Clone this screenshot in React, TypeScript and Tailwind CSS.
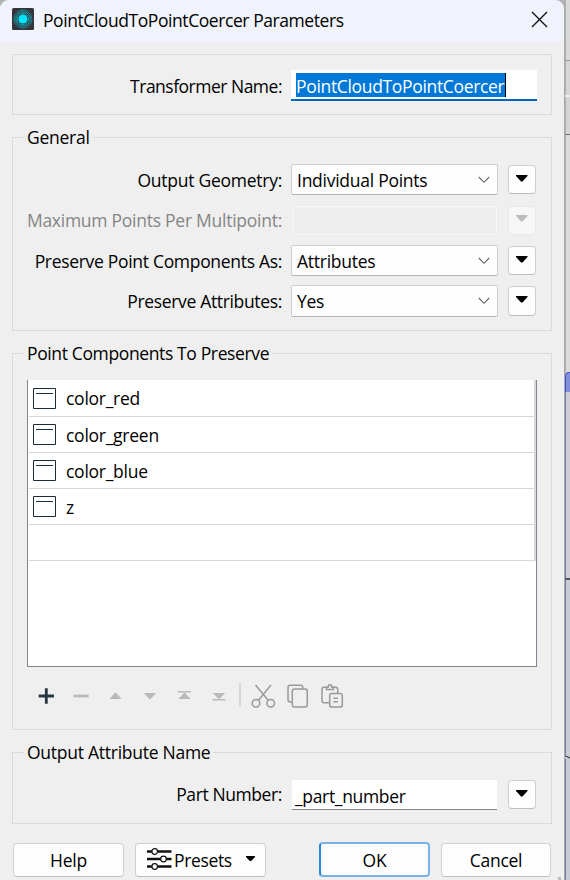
import type { ReactNode } from "react";

function Caret({ muted = false }: { muted?: boolean }) {
  return (
    <svg width="12" height="7" viewBox="0 0 12 7" className="-mt-[3px] -ml-px">
      <path d="M0 0H11.5V1L6.5 6.5H5L0 1Z" fill={muted ? "#bcbcbc" : "#000"} />
    </svg>
  );
}

function MenuButton({ muted = false, tall = "h-[29px]" }: { muted?: boolean; tall?: string }) {
  return (
    <button
      className={`ml-[10px] flex w-7 items-center justify-center rounded-[4px] border ${tall} ${
        muted ? "border-[#e8e8e8] bg-[#f7f7f7]" : "border-[#cfcfcf] border-b-[#bdbdbd] bg-[#fdfdfd]"
      }`}
    >
      <Caret muted={muted} />
    </button>
  );
}

function Combo({ children, tall = "h-[31px]" }: { children: ReactNode; tall?: string }) {
  return (
    <div className={`flex w-[207px] items-center justify-between rounded-[2px] border border-[#cfcfcf] border-b-[#b5b5b5] bg-[#fdfdfd] pr-[7px] pl-[5px] ${tall}`}>
      <span>{children}</span>
      <svg width="12" height="8" viewBox="0 0 12 8" fill="none" stroke="#666" strokeWidth="1.1">
        <path d="M0.8 1L6 6.3L11.2 1" />
      </svg>
    </div>
  );
}

function Label({ children, className = "" }: { children: ReactNode; className?: string }) {
  return <span className={`w-[270px] pr-px text-right ${className}`}>{children}</span>;
}

function Group({ title, className, children }: { title?: ReactNode; className: string; children: ReactNode }) {
  return (
    <section className={`mx-3 w-[540px] border border-[#dadada] ${className}`}>
      {title && <h2 className="-mt-[13px] ml-[11px] h-6 w-fit bg-[#efefef] pr-[3px] pl-[3px] leading-6">{title}</h2>}
      {children}
    </section>
  );
}

const components = ["color_red", "color_green", "color_blue", "z"];

function Toolbar() {
  return (
    <svg width="320" height="34" viewBox="27 679 320 34" className="mt-3 ml-[14px]" fill="none">
      <path d="M46.3 688.3V703.7M38.7 696H54" stroke="#263640" strokeWidth="2.8" />
      <path d="M73.3 696H88.7" stroke="#bcbcbc" strokeWidth="2.8" />
      <g fill="#b9b9b9">
        <path d="M109.3 699L115.5 692.3L121.7 699Z" />
        <path d="M143.8 693L150 699.7L156.2 693Z" />
        <path d="M178.3 699L184.5 692.6L190.7 699ZM178 691H191V692.5H178Z" />
        <path d="M212.8 693L219 699.2L225.2 693ZM212.5 699H225.5V700.6H212.5Z" />
      </g>
      <path d="M240 683V707" stroke="#cdcdcd" strokeWidth="1.6" />
      <g stroke="#999" strokeWidth="1.5">
        <path d="M255.5 685L268 700M271 685L258.7 700" />
        <circle cx="256" cy="703.3" r="3.8" />
        <circle cx="270.7" cy="703.3" r="3.8" />
        <path d="M292 702H290.5Q288 702 288 699.5V687.5Q288 685.3 290.3 685.3H300.5Q302.8 685.3 302.8 687.5V689" />
        <rect x="292.3" y="689" width="15" height="18" rx="2.3" />
        <path d="M329 702.7H324Q322 702.7 322 700.7V689.5Q322 687.3 324 687.3H326.5M333.5 687.3H335.5Q337.7 687.3 337.7 689.5V693" />
        <path d="M326.5 689.5V687.2H328.2Q328.2 684.8 330 684.8T331.8 687.2H333.5V689.5Z" />
        <rect x="329.7" y="693.5" width="12.6" height="13.6" rx="2.2" />
        <path d="M333.5 698.3H338M333.5 701.7H338" />
      </g>
    </svg>
  );
}

export default function App() {
  return (
    <div className="flex h-[880px] w-[570px] overflow-hidden bg-[#b4b4b4] font-['Open_Sans','Noto_Sans',sans-serif] text-[17.5px] leading-6 tracking-[-0.26px] whitespace-nowrap text-black">
      <main className="flex w-[564px] flex-col overflow-hidden rounded-t-[9px] bg-[#efefef]">
        <header className="flex h-[42px] shrink-0 items-center bg-[#f0f3fb] pr-4 pl-3">
          <svg width="22" height="22" viewBox="0 0 22 22" className="-mt-1" fill="none">
            <rect width="22" height="22" rx="1.5" fill="#36343a" />
            <circle cx="11" cy="11" r="9" stroke="#138a99" strokeWidth="1" />
            <circle cx="11" cy="11" r="7.2" stroke="#12a9bb" strokeWidth="1" />
            <circle cx="11" cy="11" r="5.6" stroke="#12a9bb" strokeWidth="0.8" />
            <circle cx="11" cy="11" r="4.6" fill="#00e5fa" />
          </svg>
          <h1 className="-mt-[3px] ml-[9px] flex-1 tracking-[-0.43px]">PointCloudToPointCoercer Parameters</h1>
          <svg width="17" height="17" viewBox="0 0 17 17" className="-mt-[3px]" stroke="#111" strokeWidth="1.4">
            <path d="M1 1L16 16M16 1L1 16" />
          </svg>
        </header>

        <Group className="mt-3 flex h-[61px] shrink-0 pt-[15px]">
          <div className="flex h-[31px] items-center">
            <Label className="tracking-[-0.5px]">Transformer Name:</Label>
            <div className="ml-2 flex h-[31px] w-[246px] items-center border-b-2 border-[#0067c0] bg-white pl-[5px]">
              <span className="h-6 w-[210px] border-r border-black bg-[#0078d7] pt-px leading-6 tracking-[-0.33px] text-white">PointCloudToPointCoercer</span>
            </div>
          </div>
        </Group>

        <Group title="General" className="mt-[22px] h-[194px] shrink-0">
          <div className="mt-[15px] flex h-[31px] items-center">
            <Label>Output Geometry:</Label>
            <span className="w-2" />
            <Combo>Individual Points</Combo>
            <MenuButton />
          </div>
          <div className="mt-[9px] flex h-8 items-center">
            <Label className="text-[#858585]">Maximum Points Per Multipoint:</Label>
            <div className="ml-2 h-[31px] w-[207px] border border-[#ebebeb] bg-[#f9f9f9] p-px">
              <div className="h-full bg-[#eeeeee]" />
            </div>
            <MenuButton muted />
          </div>
          <div className="mt-[9px] flex h-[31px] items-center">
            <Label className="tracking-[-0.31px]">Preserve Point Components As:</Label>
            <span className="w-2" />
            <Combo>Attributes</Combo>
            <MenuButton />
          </div>
          <div className="mt-[9px] flex h-8 items-center">
            <Label className="tracking-[-0.34px]">Preserve Attributes:</Label>
            <span className="w-2" />
            <Combo tall="h-8">Yes</Combo>
            <MenuButton tall="h-[30px]" />
          </div>
        </Group>

        <Group title={<span className="tracking-[-0.37px]">Point Components To Preserve</span>} className="mt-[22px] h-[377px] shrink-0">
          <div className="mt-[15px] ml-[14px] h-[287px] w-[510px] border border-t-0 border-[#82858f] bg-white">
            <ul className="ml-px h-[181px] border-r-2 border-[#d9d9d9]">
              {components.map((name) => (
                <li key={name} className="flex h-9 items-center border-b border-[#d7d7d7] pl-1 first:h-[37px]">
                  <svg width="23" height="21" viewBox="0 0 23 21" fill="none" stroke="#1d2b36">
                    <path d="M0.5 0.5H22.5V20.5H0.5ZM3 5.5H20" />
                  </svg>
                  <span className="ml-[10px]">{name}</span>
                </li>
              ))}
              <li className="h-9 border-b border-[#d7d7d7]" />
            </ul>
          </div>
          <Toolbar />
        </Group>

        <Group title="Output Attribute Name" className="mt-[22px] h-[72px] shrink-0">
          <div className="mt-4 flex h-[30px] items-start">
            <Label className="pt-[2px] tracking-[-0.4px]">Part Number:</Label>
            <div className="ml-[9px] flex h-[30px] w-[205px] items-center border-b border-[#858585] bg-white pt-[2px] pl-[3px] tracking-[-0.33px]">_part_number</div>
            <span className="w-px" />
            <MenuButton />
          </div>
        </Group>

        <footer className="mt-[19px] flex h-[34px] shrink-0 px-[13px]">
          <button className="w-[111px] rounded-[4px] border border-[#d0d0d0] border-b-[#bdbdbd] bg-[#fdfdfd]">Help</button>
          <button className="ml-[11px] flex w-[131px] items-center rounded-[4px] border border-[#d0d0d0] border-b-[#bdbdbd] bg-[#fdfdfd] pl-[11px]">
            <svg width="25" height="24" viewBox="0 0 25 24" fill="#fff" stroke="#111" className="-mt-[2px]">
              <path d="M0 4.5H24.5M0 12H24.5M0 19.5H24.5" strokeWidth="2.6" />
              <g strokeWidth="1.2">
                <circle cx="7.7" cy="4.5" r="2.8" />
                <circle cx="16.5" cy="12" r="2.8" />
                <circle cx="7.7" cy="19.5" r="2.8" />
              </g>
            </svg>
            <span className="ml-[2px] w-[73px] text-left tracking-[-0.35px]">Presets</span>
            <svg width="9" height="5" viewBox="0 0 9 5" className="-mt-[3px] -ml-px">
              <path d="M0 0H9V1L5.2 5H3.8L0 1Z" />
            </svg>
          </button>
          <button className="-mt-px ml-[53px] h-[35px] w-[111px] rounded-[4px] border-2 border-[#78b3e4] border-l-[#2b88d8] bg-[#fdfdfd]">OK</button>
          <button className="ml-[11px] w-[110px] rounded-[4px] border border-[#d0d0d0] border-b-[#bdbdbd] bg-[#fdfdfd]">Cancel</button>
        </footer>
        <div className="mr-[3px] h-[3px] w-[3px] shrink-0 self-end bg-[#bdbdbd]" />
      </main>

      <aside className="flex w-[6px] flex-col border-l border-[#aaa] bg-[#c8cad5]">
        <div className="h-[60px] border-l border-[#b0b0b0] bg-[#d9d9d9]" />
        <div className="h-px bg-[#999]" />
        <div className="h-[34px] border-l border-[#b0b0b0] bg-[#d6d6d6]" />
        <div className="h-[2px] bg-[#ececec]" />
        <div className="h-[37px] border-l border-[#b0b0b0] bg-[#d5d5d5]" />
        <div className="h-px bg-[#72727d]" />
        <div className="h-[237px] border-l border-[#b0b0b0] bg-[#dadada]" />
        <div className="h-5 rounded-tl-[4px] border-t border-l border-[#4057ca] bg-[#8090dc]" />
        <div className="h-[186px] border-l border-[#707bac] bg-[#cfcdd6]" />
        <div className="h-[2px] bg-[#555]" />
        <div className="h-[175px] border-l border-[#707bac] bg-[#c9cbd5]" />
        <svg width="5" height="4" viewBox="0 0 5 4" className="shrink-0" stroke="#222">
          <path d="M0 0.8L5 3" />
        </svg>
        <div className="flex-1 border-l border-[#707bac] bg-[#c9cbd5]" />
      </aside>
    </div>
  );
}
